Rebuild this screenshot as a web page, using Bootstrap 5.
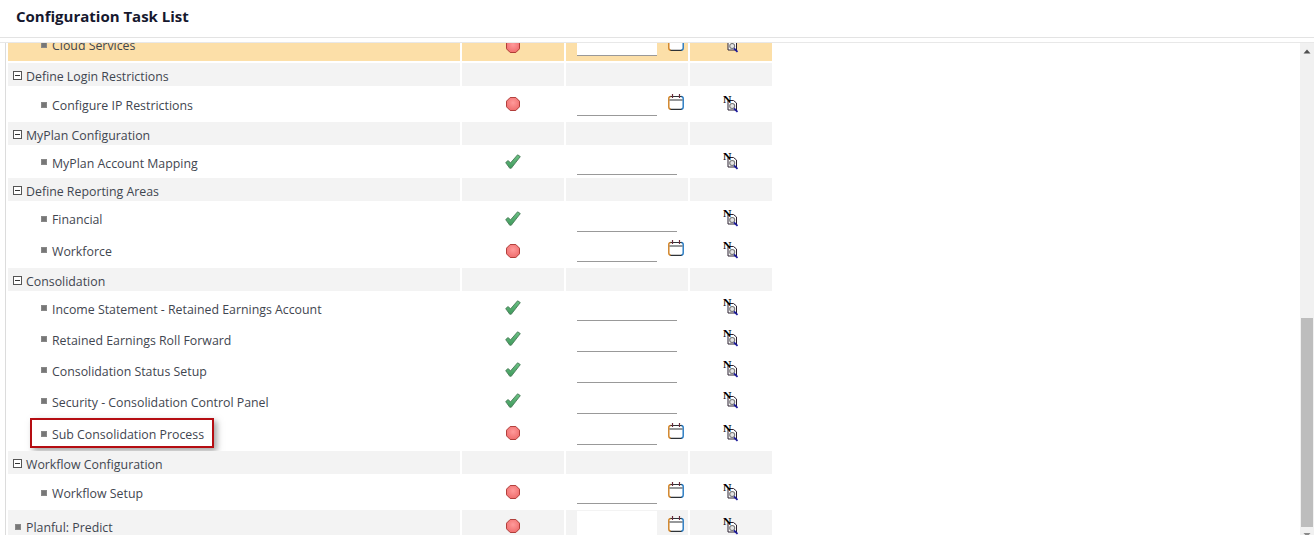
<!DOCTYPE html>
<html lang="en">
<head>
<meta charset="utf-8">
<title>Configuration Task List</title>
<link href="https://cdn.jsdelivr.net/npm/bootstrap@5.3.0/dist/css/bootstrap.min.css" rel="stylesheet">
<style>
html,body{height:535px;overflow:hidden;background:#fff}
body{font-family:"Open Sans","Noto Sans",sans-serif;font-size:12.35px;color:#3f4650}
.pagehead{height:38px;border-bottom:1px solid #e3e3e3;padding-left:16px;padding-bottom:5px}
.pagehead h1{font-size:15px;font-weight:700;color:#16182e;margin:0}
.headgap{height:5px;border-bottom:1px solid #e8e8e8}
.mainarea{height:492px}
.tablewrap{padding-left:5px}
.edgeline{border-left:1px solid #dcdcdc;height:100%;overflow:hidden}
.tasktbl{border-collapse:separate;border-spacing:2px;table-layout:fixed;width:768px;margin-top:-2px}
.tasktbl td{padding:0;vertical-align:middle;position:relative}
.c1{width:452px}.c2{width:102px}.c3{width:122px}.c4{width:82px}
.grp td{height:23px;background:#f3f3f3}
.r29 td{height:29px}.r30 td{height:30px}.r31 td{height:31px}.r32 td{height:32px}
.hl td{height:18px;background:#fcdfa8}
.tailrow td{height:32px;background:#f3f3f3}
.clipcell{height:18px;overflow:hidden;display:flex;align-items:flex-end;justify-content:center}
.clipcell .lbl{padding-top:0;margin-bottom:7px;height:16px;flex:none}
.lbl{padding-left:33px;display:flex;align-items:center;gap:5px;line-height:16px;padding-top:4px}
.lbl.up1{padding-top:2px}
.gl{padding-left:5px;display:flex;align-items:center;gap:4px;line-height:16px;padding-top:4px}
.gl.leaf{padding-left:7px;gap:5px}
.bul{display:block;width:6px;height:6px;background:#777;border:1px solid #888;margin-top:-3px;flex:none}
.minus{display:block;width:9px;height:9px;margin-top:-3px;flex:none}
.ctr{display:flex;justify-content:center;align-items:center}
.datebox{display:flex;align-items:flex-end;gap:11px;padding-left:11px;height:100%}
.datein{display:block;height:24px;width:80px;border:0;border-bottom:1px solid #999;background:transparent;flex:none}
.datein.wide{width:100px;margin-bottom:1px}
.datein.nar{margin-bottom:4px}
.calic{flex:none;margin-bottom:10px}
.whitein{background:#fff}
.tallin{height:31px;margin-bottom:0!important;border-bottom:0}
.clipcell .datebox{width:100%}
.clipcell .datein.nar{margin-bottom:5px}
.callout{position:absolute;left:22px;top:1px;width:184px;height:30px;border:2px solid #b50d12;box-shadow:3px 3px 6px rgba(90,90,90,.55);pointer-events:none}
.sbar{width:14px;background:#f1f1f1}
.sthumb{height:209px;background:#bdbdbd;margin:0 1px}
.sarrow{height:15px;flex:none}
.sarrow.btm{height:8px}
</style>
</head>
<body>
<svg width="0" height="0" class="position-absolute">
<defs>
<radialGradient id="rg" cx="50%" cy="40%" r="65%"><stop offset="0" stop-color="#ff9a9a"/><stop offset="1" stop-color="#ee6a6a"/></radialGradient>
<linearGradient id="gg" x1="0" y1="0" x2="0" y2="1"><stop offset="0" stop-color="#6cc285"/><stop offset="1" stop-color="#3f9a5c"/></linearGradient>
<symbol id="stop" viewBox="0 0 15 15"><polygon points="4.500,.5 10.500,.5 14.500,4.500 14.500,10.500 10.500,14.500 4.500,14.500 .5,10.500 .5,4.500" fill="url(#rg)" stroke="#a8302c"/></symbol>
<symbol id="chk" viewBox="0 0 16 15"><path d="M.7 8.600 3 6.600l2.600 2.200L12.600.8l2.700 1.800-9 11.600H4.700z" fill="url(#gg)" stroke="#4a7a58" stroke-width=".9" stroke-linejoin="round"/></symbol>
<symbol id="cal" viewBox="0 0 16 16"><rect x="1" y="2.500" width="14" height="12.500" rx="2" fill="#fff"/><path d="M3 15.300Q.8 15.300 .8 13V4.500Q.8 2.500 3 2.500" fill="none" stroke="#cf7f1f" stroke-width="1.400"/><path d="M13 2.500Q15.200 2.500 15.200 4.500V13Q15.200 15.300 13 15.300" fill="none" stroke="#2277c0" stroke-width="1.400"/><path d="M2.500 2.500H13.500M1.500 6H14.500M2.500 15.300H13.500" stroke="#2e3236" stroke-width="1.200"/><path d="M4.500 0V4M11.500 0V4" stroke="#6a2a3a" stroke-width="1.200"/></symbol>
<symbol id="doc" viewBox="0 0 16 17"><path d="M5 4.500H10.500L13.500 7V14H5z" fill="#fff" stroke="#2a2030"/><circle cx="9.200" cy="10" r="2.500" fill="#e4e4e4" stroke="#777" stroke-width="1.100"/><path d="M11 12.300 14.500 15.800" stroke="#1c1a9a" stroke-width="1.700"/><text x="0" y="7" font-family="Liberation Serif,serif" font-weight="700" font-size="10.500" textLength="8.500" lengthAdjust="spacingAndGlyphs" fill="#000">N</text></symbol>
</defs>
</svg>

<header class="pagehead d-flex align-items-center"><h1>Configuration Task List</h1></header>
<div class="headgap"></div>

<div class="mainarea d-flex">
 <div class="tablewrap flex-grow-1 overflow-hidden">
  <div class="edgeline">
   <table class="tasktbl">
    <colgroup><col class="c1"><col class="c2"><col class="c3"><col class="c4"></colgroup>
    <tr class="hl">
     <td><div class="clipcell justify-content-start"><div class="lbl"><i class="bul"></i>Cloud Services</div></div></td>
     <td><div class="clipcell"><svg width="14" height="14" class="mb-2"><use href="#stop"/></svg></div></td>
     <td><div class="clipcell"><div class="datebox"><span class="datein nar whitein"></span><svg class="calic" width="16" height="16"><use href="#cal"/></svg></div></div></td>
     <td><div class="clipcell"><svg width="16" height="17" class="mb-2"><use href="#doc"/></svg></div></td>
    </tr>
    <tr class="grp"><td><div class="gl"><svg class="minus" viewBox="0 0 9 9"><rect x=".5" y=".5" width="8" height="8" fill="#fff" stroke="#555"/><path d="M2 4.500H7" stroke="#333"/></svg>Define Login Restrictions</div></td><td></td><td></td><td></td></tr>
    <tr class="r32"><td><div class="lbl"><i class="bul"></i>Configure IP Restrictions</div></td><td><div class="ctr"><svg width="14" height="14"><use href="#stop"/></svg></div></td><td><div class="datebox"><span class="datein nar"></span><svg class="calic" width="16" height="16"><use href="#cal"/></svg></div></td><td><div class="ctr"><svg width="16" height="17"><use href="#doc"/></svg></div></td></tr>
    <tr class="grp"><td><div class="gl"><svg class="minus" viewBox="0 0 9 9"><rect x=".5" y=".5" width="8" height="8" fill="#fff" stroke="#555"/><path d="M2 4.500H7" stroke="#333"/></svg>MyPlan Configuration</div></td><td></td><td></td><td></td></tr>
    <tr class="r29"><td><div class="lbl"><i class="bul"></i>MyPlan Account Mapping</div></td><td><div class="ctr"><svg width="16" height="15"><use href="#chk"/></svg></div></td><td><div class="datebox"><span class="datein wide"></span></div></td><td><div class="ctr"><svg width="16" height="17"><use href="#doc"/></svg></div></td></tr>
    <tr class="grp"><td><div class="gl"><svg class="minus" viewBox="0 0 9 9"><rect x=".5" y=".5" width="8" height="8" fill="#fff" stroke="#555"/><path d="M2 4.500H7" stroke="#333"/></svg>Define Reporting Areas</div></td><td></td><td></td><td></td></tr>
    <tr class="r30"><td><div class="lbl"><i class="bul"></i>Financial</div></td><td><div class="ctr"><svg width="16" height="15"><use href="#chk"/></svg></div></td><td><div class="datebox"><span class="datein wide"></span></div></td><td><div class="ctr"><svg width="16" height="17"><use href="#doc"/></svg></div></td></tr>
    <tr class="r31"><td><div class="lbl up1"><i class="bul"></i>Workforce</div></td><td><div class="ctr"><svg width="14" height="14"><use href="#stop"/></svg></div></td><td><div class="datebox"><span class="datein nar"></span><svg class="calic" width="16" height="16"><use href="#cal"/></svg></div></td><td><div class="ctr"><svg width="16" height="17"><use href="#doc"/></svg></div></td></tr>
    <tr class="grp"><td><div class="gl"><svg class="minus" viewBox="0 0 9 9"><rect x=".5" y=".5" width="8" height="8" fill="#fff" stroke="#555"/><path d="M2 4.500H7" stroke="#333"/></svg>Consolidation</div></td><td></td><td></td><td></td></tr>
    <tr class="r29"><td><div class="lbl"><i class="bul"></i>Income Statement - Retained Earnings Account</div></td><td><div class="ctr"><svg width="16" height="15"><use href="#chk"/></svg></div></td><td><div class="datebox"><span class="datein wide"></span></div></td><td><div class="ctr"><svg width="16" height="17"><use href="#doc"/></svg></div></td></tr>
    <tr class="r29"><td><div class="lbl"><i class="bul"></i>Retained Earnings Roll Forward</div></td><td><div class="ctr"><svg width="16" height="15"><use href="#chk"/></svg></div></td><td><div class="datebox"><span class="datein wide"></span></div></td><td><div class="ctr"><svg width="16" height="17"><use href="#doc"/></svg></div></td></tr>
    <tr class="r29"><td><div class="lbl"><i class="bul"></i>Consolidation Status Setup</div></td><td><div class="ctr"><svg width="16" height="15"><use href="#chk"/></svg></div></td><td><div class="datebox"><span class="datein wide"></span></div></td><td><div class="ctr"><svg width="16" height="17"><use href="#doc"/></svg></div></td></tr>
    <tr class="r29"><td><div class="lbl"><i class="bul"></i>Security - Consolidation Control Panel</div></td><td><div class="ctr"><svg width="16" height="15"><use href="#chk"/></svg></div></td><td><div class="datebox"><span class="datein wide"></span></div></td><td><div class="ctr"><svg width="16" height="17"><use href="#doc"/></svg></div></td></tr>
    <tr class="r32"><td><div class="lbl"><i class="bul"></i>Sub Consolidation Process</div><div class="callout"></div></td><td><div class="ctr"><svg width="14" height="14"><use href="#stop"/></svg></div></td><td><div class="datebox"><span class="datein nar"></span><svg class="calic" width="16" height="16"><use href="#cal"/></svg></div></td><td><div class="ctr"><svg width="16" height="17"><use href="#doc"/></svg></div></td></tr>
    <tr class="grp"><td><div class="gl"><svg class="minus" viewBox="0 0 9 9"><rect x=".5" y=".5" width="8" height="8" fill="#fff" stroke="#555"/><path d="M2 4.500H7" stroke="#333"/></svg>Workflow Configuration</div></td><td></td><td></td><td></td></tr>
    <tr class="r32"><td><div class="lbl"><i class="bul"></i>Workflow Setup</div></td><td><div class="ctr"><svg width="14" height="14"><use href="#stop"/></svg></div></td><td><div class="datebox"><span class="datein nar"></span><svg class="calic" width="16" height="16"><use href="#cal"/></svg></div></td><td><div class="ctr"><svg width="16" height="17"><use href="#doc"/></svg></div></td></tr>
    <tr class="tailrow"><td><div class="gl leaf"><i class="bul"></i>Planful: Predict</div></td><td><div class="ctr"><svg width="14" height="14"><use href="#stop"/></svg></div></td><td><div class="datebox"><span class="datein tallin whitein"></span><svg class="calic" width="16" height="16"><use href="#cal"/></svg></div></td><td><div class="ctr"><svg width="16" height="17"><use href="#doc"/></svg></div></td></tr>
   </table>
  </div>
 </div>
 <div class="sbar d-flex flex-column">
  <svg class="sarrow" width="14" height="15" viewBox="0 0 14 15"><path d="M3.500 10.500 7 6.500l3.500 4z" fill="#505050"/></svg>
  <div class="flex-grow-1"></div>
  <div class="sthumb"></div>
  <svg class="sarrow btm" width="14" height="8" viewBox="0 0 14 8"><path d="M3.500 6 7 10l3.500-4z" fill="#8a8a8a"/></svg>
 </div>
</div>
<script src="https://cdn.jsdelivr.net/npm/bootstrap@5.3.0/dist/js/bootstrap.bundle.min.js"></script>
</body>
</html>
